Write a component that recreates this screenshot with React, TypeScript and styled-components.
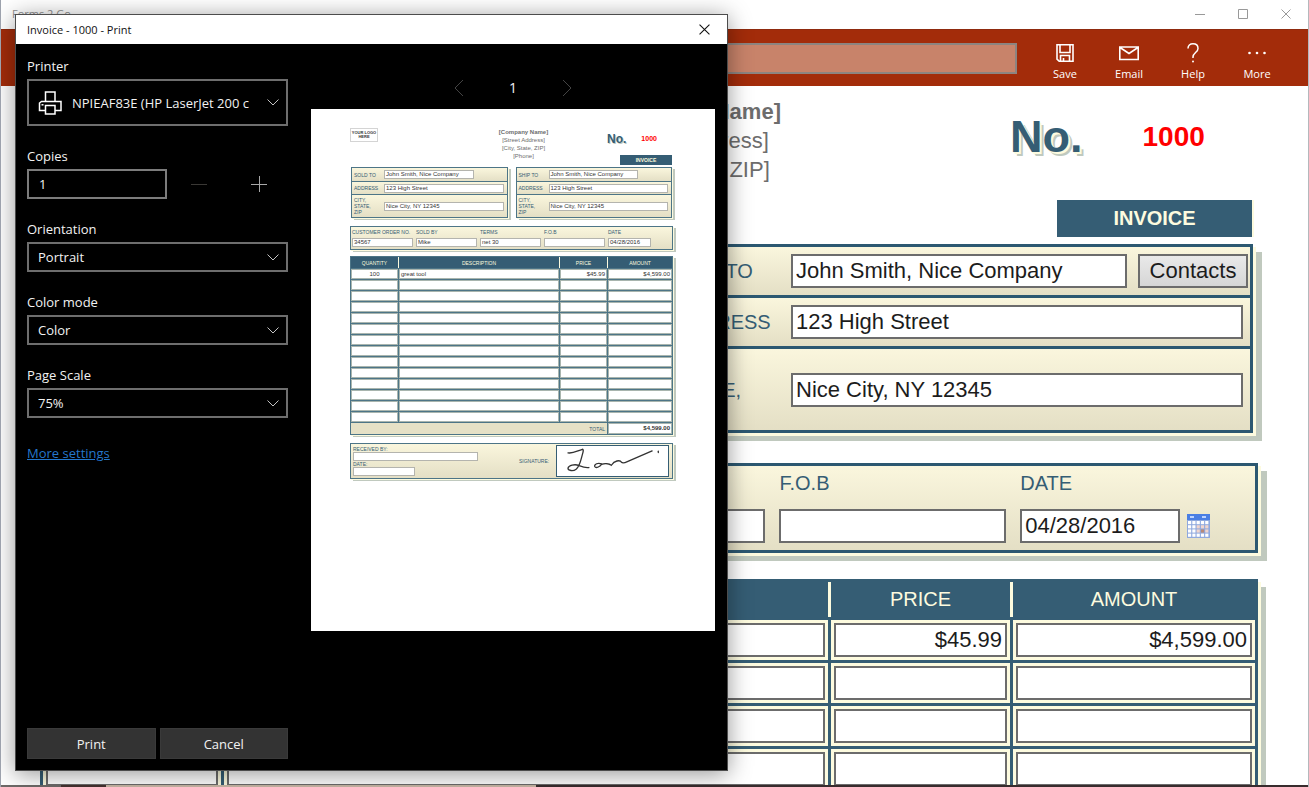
import React from 'react';
import styled, { createGlobalStyle, css } from 'styled-components';

const BLUE = '#355d74';
const LINE = '#2c5871';
const CREAM = '#fdfbdf';
const SAGE = '#c0c9be';
const UI_FONT = '"Open Sans", "Noto Sans", sans-serif';
const FORM_FONT = '"Liberation Sans", Arial, sans-serif';

const Global = createGlobalStyle`
  *, *::before, *::after { box-sizing: border-box; }
  body { margin: 0; background: #fff; }
  button, input, select { font: inherit; margin: 0; border-radius: 0; }
`;

/* ---------- application window ---------- */

const Window = styled.div`
  position: relative;
  display: flex;
  flex-direction: column;
  height: 100vh;
  overflow: hidden;
  background: #fff;
  border-left: 1px solid #9da2ad;
  border-right: 1px solid #b4b8bc;
  font-family: ${UI_FONT};
`;

const TitleBar = styled.header`
  flex: none;
  display: flex;
  justify-content: space-between;
  align-items: flex-start;
  height: 29px;
  padding: 0 1px 0 11px;
  font-size: 11px;
  line-height: 28px;
  color: #8e8e8e;
`;

const CaptionButtons = styled.div`
  display: flex;
`;

const CaptionButton = styled.button`
  display: flex;
  align-items: center;
  justify-content: center;
  width: 43px;
  height: 28px;
  padding: 0;
  border: 0;
  background: none;
  color: #999;
`;

const Ribbon = styled.div`
  flex: none;
  display: flex;
  align-items: center;
  height: 57px;
  padding: 0 19px 0 160px;
  background: #a32c0a;
  border-top: 1px solid #8f2a0e;
`;

const Search = styled.input`
  flex: 1;
  min-width: 0;
  height: 31px;
  border: 2px solid #8d8480;
  background: #c8836a;
  outline: none;
`;

const RibbonActions = styled.div`
  display: flex;
  margin-left: 16px;
  padding-top: 8px;
`;

const RibbonButton = styled.button`
  display: flex;
  flex-direction: column;
  align-items: center;
  gap: 3px;
  width: 64px;
  padding: 0;
  border: 0;
  background: none;
  color: #fff;
  font-size: 11px;
  line-height: 16px;
`;

const Desktop = styled.div`
  flex: none;
  height: 2px;
  background: linear-gradient(90deg, #6e6a68 0 60px, #453230 60px 105px, #c9b7a6 105px 535px, #382c2d 535px);
`;

/* ---------- invoice form ---------- */

const Form = styled.form`
  flex: 1;
  min-height: 0;
  overflow: hidden;
  padding: 11px 50px 0 39px;
  font-family: ${FORM_FONT};
  font-size: 22px;
  color: #1c1c1c;
`;

const FormHead = styled.div`
  display: grid;
  grid-template-columns: 331px 1fr 242px;
  height: 140px;
  padding-right: 6px;
`;

const Company = styled.div`
  grid-column: 2;
  text-align: center;
  line-height: 29px;
  color: #6d6d6d;
`;

const NumberBlock = styled.div`
  display: flex;
  flex-direction: column;
  justify-content: space-between;
  align-items: flex-end;
`;

const NumberRow = styled.div`
  display: flex;
  align-items: center;
  gap: 60px;
  width: 100%;
  height: 79px;
  font-weight: bold;
`;

const No = styled.span`
  font-size: 45px;
  color: ${BLUE};
  text-shadow: 1px 1px 0 ${CREAM}, 2px 2px 0 ${CREAM}, 4px 4px 0 ${SAGE};
`;

const InvoiceNumber = styled.span`
  font-size: 28px;
  color: #f00;
`;

const InvoiceTag = styled.div`
  width: 195px;
  line-height: 37px;
  text-align: center;
  font-size: 20px;
  font-weight: bold;
  color: ${CREAM};
  background: ${BLUE};
  box-shadow: 2px 0 0 ${CREAM};
`;

const panel = css`
  border: 3px solid ${LINE};
  background: ${LINE};
  box-shadow: 3px 3px 0 ${CREAM}, 9px 8px 0 ${SAGE};
`;

const gradient = css`
  background: linear-gradient(#faf6dd, #e4dfc5);
`;

const ShipPanel = styled.section`
  ${panel}
  display: flex;
  flex-direction: column;
  gap: 3px;
  width: 588px;
  margin: 7px 5px 30px auto;
`;

const ShipRow = styled.div<{ $tall?: boolean; $wide?: boolean }>`
  ${gradient}
  display: grid;
  grid-template-columns: 117px 1fr auto;
  align-items: center;
  height: ${p => (p.$tall ? 81 : 48)}px;
  padding: 0 ${p => (p.$wide ? 2 : 7)}px 0 6px;
`;

const FieldLabel = styled.label`
  font-size: 20px;
  line-height: 24px;
  color: ${BLUE};
`;

const Field = styled.input<{ $align?: string }>`
  display: block;
  width: 100%;
  min-width: 0;
  height: 34px;
  padding: 0 3px;
  border: 2px solid #6c6c6c;
  background: #fff;
  color: #1c1c1c;
  text-align: ${p => p.$align || 'left'};
  outline: none;
`;

const ContactsButton = styled.button`
  width: 110px;
  height: 34px;
  margin-left: 11px;
  padding: 0;
  border: 2px solid #6c6c6c;
  background: linear-gradient(#e9e9e9, #d6d6d6);
  color: #1c1c1c;
`;

const OrderPanel = styled.section`
  ${panel}
  ${gradient}
  display: grid;
  grid-template-columns: repeat(5, 1fr);
  gap: 14px;
  height: 90px;
  margin-bottom: 26px;
  padding: 5px 8px 0;
`;

const OrderField = styled.div`
  display: flex;
  flex-direction: column;
  gap: 14px;
  white-space: nowrap;
`;

const DateBox = styled.div`
  display: grid;
  grid-template-columns: 160px auto;
  align-items: center;
  justify-content: start;
  gap: 7px;
`;

const IconButton = styled.button`
  display: flex;
  padding: 0;
  border: 0;
  background: none;
`;

const Items = styled.table`
  width: 100%;
  table-layout: fixed;
  border-collapse: separate;
  border-spacing: 3px;
  background: ${BLUE};
  box-shadow: 3px 3px 0 ${CREAM}, 8px 8px 0 ${SAGE};
  th {
    height: 35px;
    padding: 0;
    font-size: 20px;
    font-weight: normal;
    color: ${CREAM};
  }
  th:not(:last-child) { box-shadow: 3px 0 0 ${CREAM}; }
  td {
    height: 40px;
    padding: 3px;
    background: ${CREAM};
  }
`;

/* ---------- print dialog ---------- */

const Dialog = styled.div`
  position: absolute;
  top: 14px;
  left: 14px;
  bottom: 16px;
  width: 713px;
  display: flex;
  flex-direction: column;
  border: 1px solid #4c4c4c;
  background: #000;
  color: #f2f2f2;
  font-size: 13px;
  box-shadow: 0 3px 22px rgba(0, 0, 0, 0.42);
`;

const DialogTitle = styled.div`
  flex: none;
  display: flex;
  align-items: center;
  justify-content: space-between;
  height: 29px;
  padding: 0 1px 1px 11px;
  background: #fff;
  color: #111;
  font-size: 11px;
`;

const CloseButton = styled(CaptionButton)`
  color: #111;
`;

const DialogBody = styled.div`
  flex: 1;
  display: grid;
  grid-template-columns: 261px 1fr;
  gap: 23px;
  padding: 12px 12px 11px 11px;
`;

const Settings = styled.div`
  display: flex;
  flex-direction: column;
`;

const Setting = styled.div`
  display: flex;
  flex-direction: column;
  gap: 3px;
  margin-bottom: 20px;
`;

const SettingLabel = styled.label`
  line-height: 20px;
`;

const SelectBox = styled.div`
  display: grid;
  align-items: center;
  > * { grid-area: 1 / 1; }
  > svg { pointer-events: none; }
`;

const Select = styled.select<{ $large?: boolean }>`
  appearance: none;
  width: 100%;
  height: ${p => (p.$large ? 47 : 30)}px;
  padding: 0 ${p => (p.$large ? 30 : 10)}px 0 ${p => (p.$large ? 43 : 9)}px;
  border: 2px solid #6e6e6e;
  background: #000;
  color: #f2f2f2;
  outline: none;
  text-overflow: clip;
`;

const SelectArrow = styled.svg`
  justify-self: end;
  margin-right: 8px;
`;

const PrinterIcon = styled.svg`
  margin-left: 11px;
`;

const CopiesRow = styled.div`
  display: grid;
  grid-template-columns: 140px 60px 60px;
  align-items: center;
`;

const CopiesInput = styled.input`
  width: 100%;
  height: 30px;
  padding: 0 10px;
  border: 2px solid #7c7c7c;
  background: #000;
  color: #f2f2f2;
  outline: none;
`;

const StepButton = styled.button<{ $dim?: boolean }>`
  display: flex;
  justify-content: center;
  padding: 0;
  margin-left: 4px;
  border: 0;
  background: none;
  color: ${p => (p.$dim ? '#3a3835' : '#a8a8a8')};
`;

const MoreLink = styled.a`
  align-self: flex-start;
  margin-top: 5px;
  line-height: 20px;
  color: #2477cc;
`;

const Actions = styled.div`
  display: grid;
  grid-template-columns: 1fr 1fr;
  gap: 4px;
  margin-top: auto;
`;

const ActionButton = styled.button`
  height: 31px;
  padding: 0;
  border: 1px solid #3a3a3a;
  background: #333;
  color: #f2f2f2;
`;

const PreviewArea = styled.div`
  display: flex;
  flex-direction: column;
`;

const Pager = styled.div`
  display: flex;
  justify-content: center;
  align-items: center;
  gap: 43px;
  height: 53px;
  padding-top: 10px;
  font-size: 14px;
`;

const PageCount = styled.span`
  width: 12px;
  text-align: center;
`;

/* ---------- printed page ---------- */

const Sheet = styled.article`
  height: 522px;
  padding: 19px 42px 0 39px;
  background: #fff;
  color: #333;
  font-family: ${FORM_FONT};
  font-size: 6px;
  line-height: 8px;
`;

const SheetHead = styled.div`
  display: grid;
  grid-template-columns: 90px 1fr 65px;
  height: 37px;
  padding-right: 1px;
`;

const SheetLogo = styled.div`
  width: 28px;
  height: 14px;
  padding-top: 2px;
  border: 1px solid #d4d4d4;
  text-align: center;
  font-size: 4px;
  line-height: 4px;
  font-weight: bold;
`;

const SheetCompany = styled.div`
  text-align: center;
  color: #6d6d6d;
`;

const SheetNumber = styled.div`
  display: flex;
  flex-direction: column;
  align-items: flex-end;
  justify-content: space-between;
  font-weight: bold;
`;

const SheetNumberRow = styled.div`
  display: flex;
  align-items: center;
  gap: 15px;
  width: 100%;
  height: 22px;
`;

const SheetNo = styled.span`
  font-size: 12px;
  color: ${BLUE};
  text-shadow: 1px 1px 0 ${SAGE};
`;

const SheetNum = styled.span`
  font-size: 7px;
  color: #f00;
`;

const SheetTag = styled.div`
  width: 52px;
  line-height: 10px;
  text-align: center;
  font-size: 5px;
  background: ${BLUE};
  color: ${CREAM};
`;

const sheetPanel = css`
  border: 1px solid #4d7587;
  box-shadow: 1px 1px 0 ${CREAM}, 3px 2px 0 ${SAGE};
`;

const SheetParties = styled.div`
  display: grid;
  grid-template-columns: 1fr 1fr;
  gap: 8px;
  margin: 2px 1px 8px;
`;

const SheetParty = styled.div`
  ${sheetPanel}
  display: flex;
  flex-direction: column;
  gap: 1px;
  background: #4d7587;
`;

const SheetRow = styled.div<{ $h: number; $short?: boolean }>`
  ${gradient}
  display: grid;
  grid-template-columns: 30px 1fr;
  align-items: center;
  height: ${p => p.$h}px;
  padding: 0 ${p => (p.$short ? 33 : 3)}px 0 2px;
`;

const SheetLabel = styled.span`
  font-size: 5px;
  line-height: 6px;
  color: ${BLUE};
`;

const SheetField = styled.span<{ $w?: number }>`
  display: block;
  width: ${p => (p.$w ? `${p.$w}px` : 'auto')};
  height: 9px;
  padding-left: 1px;
  line-height: 7px;
  border: 1px solid #b4b4ae;
  background: #fff;
`;

const SheetOrder = styled.div`
  ${sheetPanel}
  ${gradient}
  display: grid;
  grid-template-columns: repeat(5, 61px);
  gap: 3px;
  height: 24px;
  margin-bottom: 6px;
  padding: 2px 1px;
`;

const SheetOrderField = styled.div`
  display: flex;
  flex-direction: column;
  gap: 3px;
  white-space: nowrap;
`;

const SheetItems = styled.table`
  width: 100%;
  table-layout: fixed;
  border-collapse: separate;
  border-spacing: 1px;
  background: #4d7587;
  box-shadow: 1px 1px 0 ${CREAM}, 3px 2px 0 ${SAGE};
  th {
    height: 11px;
    padding: 0;
    font-size: 5px;
    line-height: 8px;
    font-weight: normal;
    color: ${CREAM};
    background: ${BLUE};
  }
  thead th:not(:last-child) { box-shadow: 1px 0 0 ${CREAM}; }
  td {
    height: 10px;
    padding: 0 1px;
    line-height: 7px;
    border: 1px solid #a9b5ae;
    background: #fff;
  }
  tfoot td {
    height: 11px;
    text-align: right;
    font-weight: bold;
  }
  tfoot th {
    padding-right: 2px;
    text-align: right;
    color: ${BLUE};
    background: #e6e1c6;
  }
`;

const SheetCell = styled.td<{ $align?: string }>`
  text-align: ${p => p.$align || 'left'};
`;

const SheetSign = styled.div`
  ${sheetPanel}
  ${gradient}
  display: grid;
  grid-template-columns: 166px 1fr 113px;
  align-items: center;
  height: 36px;
  margin-top: 8px;
  padding: 0 3px 0 2px;
`;

const SheetReceived = styled.div`
  display: flex;
  flex-direction: column;
`;

const SignatureBox = styled.div`
  height: 32px;
  border: 1px solid ${BLUE};
  background: #fff;
  svg { display: block; width: 100%; height: 100%; }
`;

/* ---------- icons ---------- */

const Chevron = ({ d, w, h, color }: { d: string; w: number; h: number; color: string }) => (
  <svg width={w} height={h} viewBox={`0 0 ${w} ${h}`} fill="none" stroke={color}>
    <path d={d} />
  </svg>
);

const Arrow = () => (
  <SelectArrow width="14" height="9" viewBox="0 0 14 9" fill="none" stroke="#c4c4c4">
    <path d="M1.5 1.5 7 7l5.5-5.5" />
  </SelectArrow>
);

const CloseIcon = ({ size = 10 }: { size?: number }) => (
  <svg width={size} height={size} viewBox="0 0 10 10" stroke="currentColor">
    <path d="M.5.5l9 9M9.5.5l-9 9" />
  </svg>
);

const SaveIcon = () => (
  <svg width="20" height="20" viewBox="0 0 20 20" fill="none" stroke="#fff" strokeWidth="1.6">
    <path d="M2 1.700h16v16.600H4.200L2 16.200zM5 2v7.500h10V2M5.500 18v-5.500h9V18M8.500 18v-3" />
  </svg>
);

const MailIcon = () => (
  <svg width="20" height="20" viewBox="0 0 20 20" fill="none" stroke="#fff" strokeWidth="1.6">
    <path d="M.8 4h18.400v12.500H.8zM1 4.500l9 6 9-6" />
  </svg>
);

const HelpIcon = () => (
  <svg width="20" height="20" viewBox="0 0 20 20" fill="none" stroke="#fff" strokeWidth="1.5">
    <path d="M5 5.500C5 2.500 7 .8 10 .8s5 1.800 5 4.600c0 4-5 4.300-5 8.600v1" />
    <circle cx="10" cy="18.600" r="1" fill="#fff" stroke="none" />
  </svg>
);

const MoreIcon = () => (
  <svg width="20" height="20" viewBox="0 0 20 20" fill="#fff">
    <circle cx="2.500" cy="10" r="1.300" />
    <circle cx="10" cy="10" r="1.300" />
    <circle cx="17.500" cy="10" r="1.300" />
  </svg>
);

const CalendarIcon = () => (
  <svg width="23" height="24" viewBox="0 0 23 24">
    <rect width="23" height="24" fill="#8fa9de" />
    <rect width="23" height="6" fill="#4a7fe4" />
    <path d="M3 3h4M15 3h4" stroke="#bcd3ff" strokeWidth="2" />
    {[0, 1, 2, 3].map(r =>
      [0, 1, 2, 3, 4].map(c => (
        <rect
          key={`${r}-${c}`}
          x={1 + c * 4.3}
          y={7 + r * 4.200}
          width="3.200"
          height="3.200"
          fill={r === 2 && c === 3 ? '#b98a78' : c > 1 && r > 0 && r < 3 ? '#f0d5cd' : '#fff'}
        />
      )),
    )}
  </svg>
);

/* ---------- data ---------- */

const ribbonActions = [
  { label: 'Save', icon: <SaveIcon /> },
  { label: 'Email', icon: <MailIcon /> },
  { label: 'Help', icon: <HelpIcon /> },
  { label: 'More', icon: <MoreIcon /> },
];

const party = { name: 'John Smith, Nice Company', street: '123 High Street', city: 'Nice City, NY 12345' };

const orderFields: [string, string][] = [
  ['CUSTOMER ORDER NO.', '34567'],
  ['SOLD BY', 'Mike'],
  ['TERMS', 'net 30'],
  ['F.O.B', ''],
  ['DATE', '04/28/2016'],
];

const columns = ['QUANTITY', 'DESCRIPTION', 'PRICE', 'AMOUNT'];
const aligns = ['center', 'left', 'right', 'right'];
const firstItem = ['100', 'great tool', '$45.99', '$4,599.00'];
const itemRows = Array.from({ length: 14 }, (_, i) => (i === 0 ? firstItem : ['', '', '', '']));

/* ---------- sections ---------- */

const InvoiceForm = () => (
  <Form onSubmit={e => e.preventDefault()}>
    <FormHead>
      <Company>
        <strong>[Company Name]</strong>
        <div>[Street Address]</div>
        <div>[City, State, ZIP]</div>
      </Company>
      <NumberBlock>
        <NumberRow>
          <No>No.</No>
          <InvoiceNumber>1000</InvoiceNumber>
        </NumberRow>
        <InvoiceTag>INVOICE</InvoiceTag>
      </NumberBlock>
    </FormHead>
    <ShipPanel>
      <ShipRow $wide>
        <FieldLabel htmlFor="ship-name">SHIP TO</FieldLabel>
        <Field id="ship-name" defaultValue={party.name} />
        <ContactsButton type="button">Contacts</ContactsButton>
      </ShipRow>
      <ShipRow>
        <FieldLabel htmlFor="ship-street">ADDRESS</FieldLabel>
        <Field id="ship-street" defaultValue={party.street} />
      </ShipRow>
      <ShipRow $tall>
        <FieldLabel htmlFor="ship-city">
          CITY,
          <br />
          STATE,
          <br />
          ZIP
        </FieldLabel>
        <Field id="ship-city" defaultValue={party.city} />
      </ShipRow>
    </ShipPanel>
    <OrderPanel>
      {orderFields.map(([label, value], i) => (
        <OrderField key={label}>
          <FieldLabel htmlFor={`order-${i}`}>{label}</FieldLabel>
          {label === 'DATE' ? (
            <DateBox>
              <Field id={`order-${i}`} defaultValue={value} />
              <IconButton type="button" aria-label="Pick a date">
                <CalendarIcon />
              </IconButton>
            </DateBox>
          ) : (
            <Field id={`order-${i}`} defaultValue={value} />
          )}
        </OrderField>
      ))}
    </OrderPanel>
    <Items>
      <colgroup>
        <col style={{ width: 178 }} />
        <col />
        <col style={{ width: 179 }} />
        <col style={{ width: 242 }} />
      </colgroup>
      <thead>
        <tr>
          {columns.map(c => (
            <th key={c}>{c}</th>
          ))}
        </tr>
      </thead>
      <tbody>
        {itemRows.map((row, r) => (
          <tr key={r}>
            {row.map((v, c) => (
              <td key={c}>
                <Field aria-label={`${columns[c]} ${r + 1}`} $align={aligns[c]} defaultValue={v} />
              </td>
            ))}
          </tr>
        ))}
      </tbody>
    </Items>
  </Form>
);

const PartyPreview = ({ title }: { title: string }) => (
  <SheetParty>
    <SheetRow $h={13} $short>
      <SheetLabel>{title}</SheetLabel>
      <SheetField>{party.name}</SheetField>
    </SheetRow>
    <SheetRow $h={12}>
      <SheetLabel>ADDRESS</SheetLabel>
      <SheetField>{party.street}</SheetField>
    </SheetRow>
    <SheetRow $h={22}>
      <SheetLabel>
        CITY,
        <br />
        STATE,
        <br />
        ZIP
      </SheetLabel>
      <SheetField>{party.city}</SheetField>
    </SheetRow>
  </SheetParty>
);

const Preview = () => (
  <Sheet>
    <SheetHead>
      <SheetLogo>
        YOUR LOGO
        <br />
        HERE
      </SheetLogo>
      <SheetCompany>
        <strong>[Company Name]</strong>
        <div>[Street Address]</div>
        <div>[City, State, ZIP]</div>
        <div>[Phone]</div>
      </SheetCompany>
      <SheetNumber>
        <SheetNumberRow>
          <SheetNo>No.</SheetNo>
          <SheetNum>1000</SheetNum>
        </SheetNumberRow>
        <SheetTag>INVOICE</SheetTag>
      </SheetNumber>
    </SheetHead>
    <SheetParties>
      <PartyPreview title="SOLD TO" />
      <PartyPreview title="SHIP TO" />
    </SheetParties>
    <SheetOrder>
      {orderFields.map(([label, value]) => (
        <SheetOrderField key={label}>
          <SheetLabel>{label}</SheetLabel>
          <SheetField $w={label === 'DATE' ? 43 : undefined}>{value}</SheetField>
        </SheetOrderField>
      ))}
    </SheetOrder>
    <SheetItems>
      <colgroup>
        <col style={{ width: 47 }} />
        <col />
        <col style={{ width: 47 }} />
        <col style={{ width: 64 }} />
      </colgroup>
      <thead>
        <tr>
          {columns.map(c => (
            <th key={c}>{c}</th>
          ))}
        </tr>
      </thead>
      <tbody>
        {itemRows.map((row, r) => (
          <tr key={r}>
            {row.map((v, c) => (
              <SheetCell key={c} $align={aligns[c]}>
                {v}
              </SheetCell>
            ))}
          </tr>
        ))}
      </tbody>
      <tfoot>
        <tr>
          <th colSpan={3}>TOTAL</th>
          <td>$4,599.00</td>
        </tr>
      </tfoot>
    </SheetItems>
    <SheetSign>
      <SheetReceived>
        <SheetLabel>RECEIVED BY:</SheetLabel>
        <SheetField $w={125} />
        <SheetLabel>DATE:</SheetLabel>
        <SheetField $w={62} />
      </SheetReceived>
      <SheetLabel>SIGNATURE:</SheetLabel>
      <SignatureBox>
        <svg viewBox="648 138 337 92" fill="none" stroke="#333" strokeWidth="4" strokeLinecap="round">
          <path d="M680 159C694 162 706 154 724 148C730 148 725 160 722 172C718 188 714 202 705 209C696 216 680 214 680 206C682 198 700 192 714 198C724 202 734 206 744 204" />
          <path d="M783 193C772 188 760 194 762 201C766 208 780 200 783 194C792 191 806 192 813 197C817 191 822 186 830 184C838 182 842 184 844 188C848 192 854 190 862 186L938 153" />
          <path d="M957 154v4" />
        </svg>
      </SignatureBox>
    </SheetSign>
  </Sheet>
);

const DropDown = ({ id, label, value }: { id: string; label: string; value: string }) => (
  <Setting>
    <SettingLabel htmlFor={id}>{label}</SettingLabel>
    <SelectBox>
      <Select id={id}>
        <option>{value}</option>
      </Select>
      <Arrow />
    </SelectBox>
  </Setting>
);

const PrintDialog = () => (
  <Dialog role="dialog" aria-label="Print">
    <DialogTitle>
      <span>Invoice - 1000 - Print</span>
      <CloseButton aria-label="Close dialog">
        <CloseIcon size={11} />
      </CloseButton>
    </DialogTitle>
    <DialogBody>
      <Settings>
        <Setting>
          <SettingLabel htmlFor="printer">Printer</SettingLabel>
          <SelectBox>
            <Select id="printer" $large>
              <option>NPIEAF83E (HP LaserJet 200 c</option>
            </Select>
            <PrinterIcon width="25" height="24" viewBox="0 0 25 24" fill="none" stroke="#fff" strokeWidth="1.500">
              <path d="M7.500 10.500V1h9.500v9.500M7 19.500H1.500v-7.500l2-1.500H23v9h-5.500M7.500 14.500h9.500V23H7.500z" />
              <path d="M3.500 13.800h2" />
            </PrinterIcon>
            <Arrow />
          </SelectBox>
        </Setting>
        <Setting>
          <SettingLabel htmlFor="copies">Copies</SettingLabel>
          <CopiesRow>
            <CopiesInput id="copies" defaultValue="1" />
            <StepButton $dim aria-label="Fewer copies">
              <svg width="16" height="16" viewBox="0 0 16 16" stroke="currentColor">
                <path d="M0 8.500h16" />
              </svg>
            </StepButton>
            <StepButton aria-label="More copies">
              <svg width="16" height="16" viewBox="0 0 16 16" stroke="currentColor">
                <path d="M0 8.500h16M8.500 0v16" />
              </svg>
            </StepButton>
          </CopiesRow>
        </Setting>
        <DropDown id="orientation" label="Orientation" value="Portrait" />
        <DropDown id="color-mode" label="Color mode" value="Color" />
        <DropDown id="page-scale" label="Page Scale" value="75%" />
        <MoreLink href="#more">More settings</MoreLink>
        <Actions>
          <ActionButton>Print</ActionButton>
          <ActionButton>Cancel</ActionButton>
        </Actions>
      </Settings>
      <PreviewArea>
        <Pager>
          <IconButton aria-label="Previous page">
            <Chevron w={10} h={18} d="M9 1 1 9l8 8" color="#444" />
          </IconButton>
          <PageCount>1</PageCount>
          <IconButton aria-label="Next page">
            <Chevron w={10} h={18} d="M1 1l8 8-8 8" color="#444" />
          </IconButton>
        </Pager>
        <Preview />
      </PreviewArea>
    </DialogBody>
  </Dialog>
);

export default function App() {
  return (
    <>
      <Global />
      <Window>
        <TitleBar>
          <span>Forms 2 Go</span>
          <CaptionButtons>
            <CaptionButton aria-label="Minimize">
              <svg width="10" height="10" viewBox="0 0 10 10" stroke="currentColor">
                <path d="M0 5.500h10" />
              </svg>
            </CaptionButton>
            <CaptionButton aria-label="Maximize">
              <svg width="10" height="10" viewBox="0 0 10 10" fill="none" stroke="currentColor">
                <path d="M.5.5h9v9h-9z" />
              </svg>
            </CaptionButton>
            <CaptionButton aria-label="Close">
              <CloseIcon />
            </CaptionButton>
          </CaptionButtons>
        </TitleBar>
        <Ribbon>
          <Search aria-label="Search" />
          <RibbonActions>
            {ribbonActions.map(a => (
              <RibbonButton key={a.label}>
                {a.icon}
                {a.label}
              </RibbonButton>
            ))}
          </RibbonActions>
        </Ribbon>
        <InvoiceForm />
        <Desktop />
        <PrintDialog />
      </Window>
    </>
  );
}
